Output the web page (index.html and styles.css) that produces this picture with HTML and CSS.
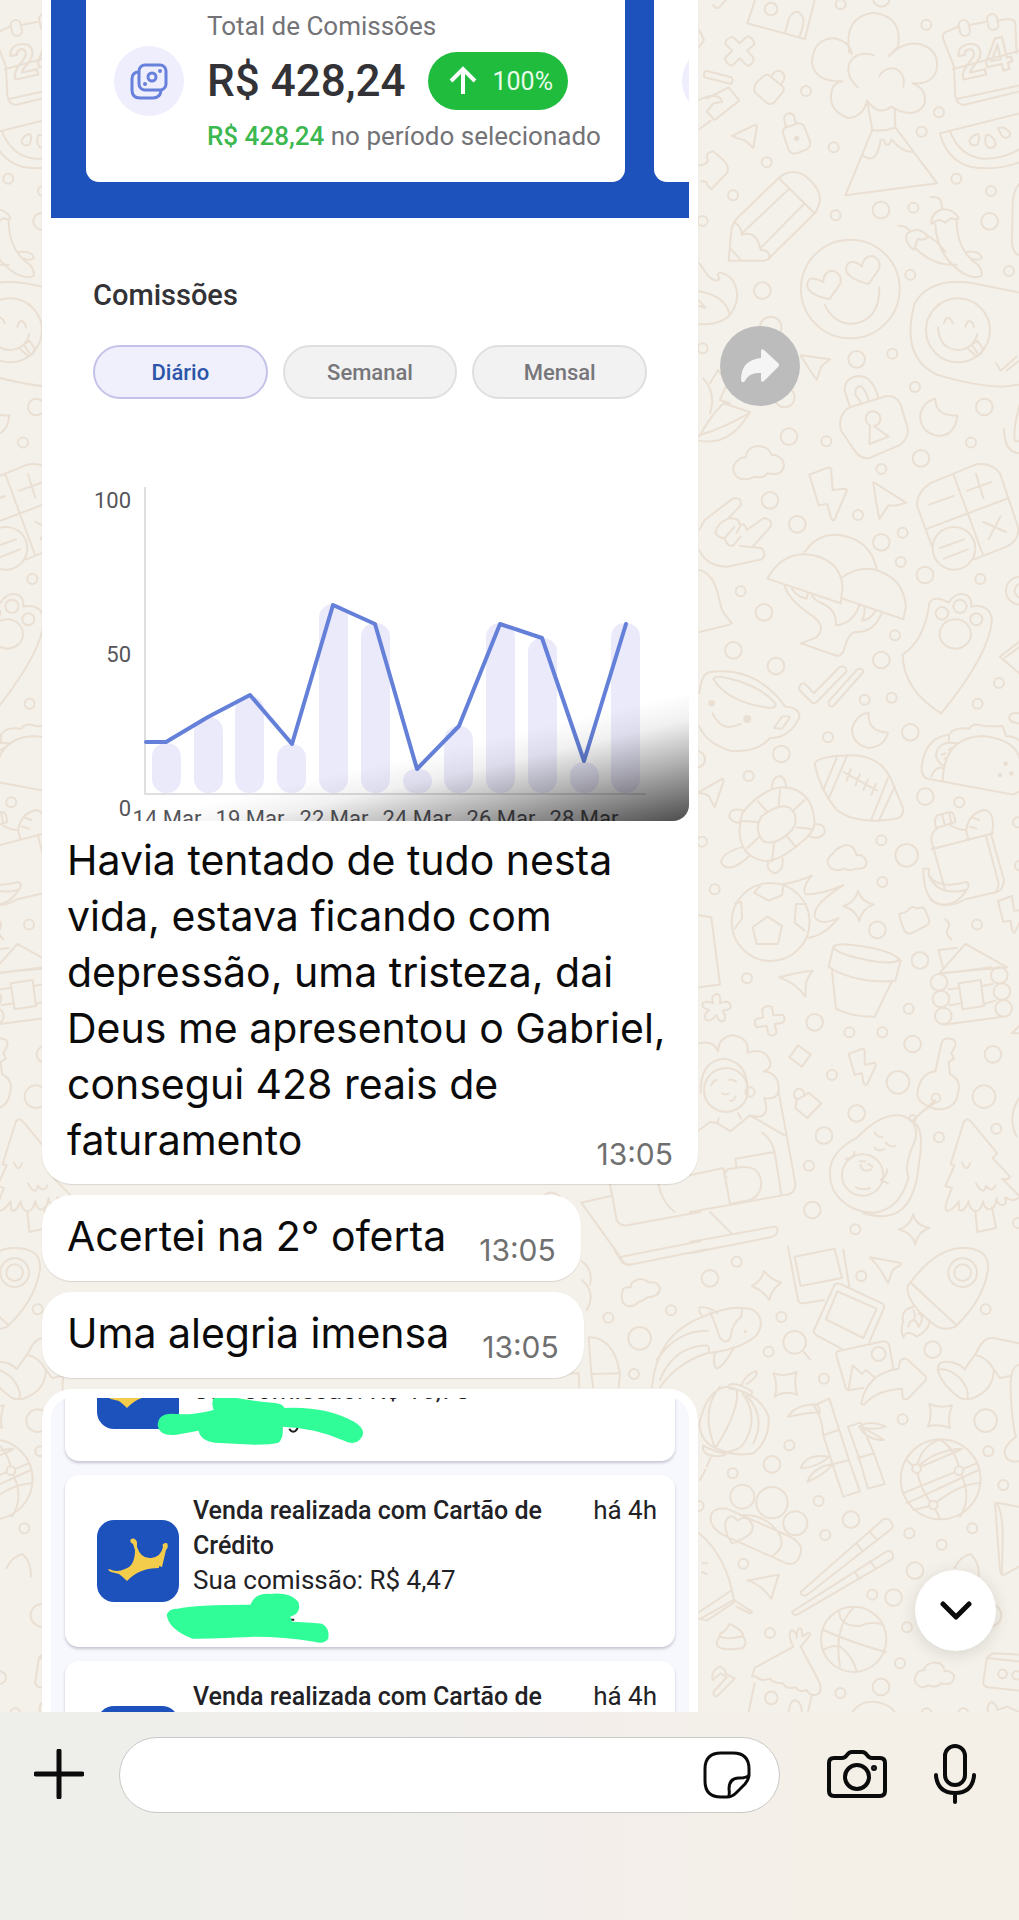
FILE: index.html
```html
<!DOCTYPE html>
<html lang="pt-BR">
<head>
<meta charset="utf-8">
<meta name="viewport" content="width=device-width, initial-scale=1">
<title>Conversa</title>
<link rel="stylesheet" href="styles.css">
</head>
<body>
<main class="chat">
  <svg class="wallpaper" aria-hidden="true">
    <defs>
      <g id="doodles">
        <g transform="translate(690 0) scale(.3333)">
          <g class="dots">
            <circle cx="243" cy="27" r="19"/><circle cx="452" cy="13" r="15"/><circle cx="574" cy="-5" r="25"/><circle cx="709" cy="74" r="15"/><circle cx="348" cy="273" r="15"/><circle cx="747" cy="337" r="15"/><circle cx="695" cy="395" r="15"/><circle cx="431" cy="442" r="15"/><circle cx="230" cy="487" r="15"/><circle cx="129" cy="586" r="15"/><circle cx="799" cy="536" r="15"/><circle cx="903" cy="573" r="15"/><circle cx="573" cy="630" r="25"/><circle cx="670" cy="623" r="15"/><circle cx="899" cy="664" r="25"/><circle cx="437" cy="646" r="15"/><circle cx="38" cy="663" r="15"/><circle cx="661" cy="824" r="15"/><circle cx="957" cy="813" r="15"/><circle cx="217" cy="872" r="25"/><circle cx="242" cy="982" r="32"/><circle cx="38" cy="1045" r="15"/><circle cx="500" cy="1078" r="25"/><circle cx="607" cy="1061" r="15"/><circle cx="284" cy="1192" r="30"/><circle cx="675" cy="1161" r="15"/><circle cx="883" cy="1221" r="25"/><circle cx="297" cy="1310" r="25"/><circle cx="409" cy="1324" r="15"/><circle cx="843" cy="1328" r="15"/><circle cx="693" cy="1375" r="25"/>
          </g>
          <path d="M195 0L172 70L345 117L374 0M285 98L297 55Q318 18 338 50Q346 62 328 112M70 15Q78 30 90 20L108 0"/>
          <path d="M128 110L149 130L170 110Q182 108 190 122Q196 132 190 136L171 152L190 172Q194 184 182 194Q174 200 168 194L149 175L128 196Q116 198 108 184Q102 176 108 170L127 152L106 132Q104 118 128 110Z"/>
          <path d="M48 212L124 232Q132 238 124 252L44 232Q38 220 48 212ZM28 90L42 120L28 140M28 300Q62 282 84 290Q98 300 96 306L70 310L50 335L74 360L148 302L116 262L50 296M28 388L62 362"/>
          <path d="M200 246L225 226Q232 222 240 228L276 258Q284 264 280 274L254 306Q244 316 232 310L196 278Q188 266 200 246ZM244 230Q252 212 266 212Q288 218 282 240L272 254"/>
          <path d="M284 384Q276 392 280 402L296 450Q304 464 320 460L350 448Q364 440 360 424L342 378Q334 368 322 370ZM288 380L282 358Q284 340 300 340Q314 344 314 356L318 370"/>
          <circle class="ink" cx="320" cy="415" r="8"/>
          <path d="M126 408L196 374Q202 376 200 384L190 444L164 420Q144 418 126 408ZM28 496Q52 494 54 480Q46 468 56 458L70 454L106 486Q118 502 112 518L64 568L50 554Q54 542 34 544"/>
          <path d="M478 158Q460 50 550 38Q640 50 624 140L597 168Q640 122 690 132Q750 150 740 210Q726 254 668 250Q716 270 702 316Q670 360 603 320Q566 350 531 302Q520 350 474 354Q410 330 426 270Q432 248 458 244Q376 246 366 190Q368 118 430 114Q480 124 486 162M552 166Q500 150 478 190Q466 230 504 262M568 228Q584 200 616 206Q648 222 640 260"/>
          <path d="M531 302L547 390L466 586L742 550L616 382L614 326M547 390Q582 396 616 382M516 464Q560 500 572 420Q582 412 586 432Q600 440 604 418Q640 460 672 456"/>
          <path d="M804 80L764 98Q756 106 760 118L792 200L796 286Q800 316 824 314L990 274M788 208L990 152M804 296L990 256M842 74L886 66M926 62Q976 50 976 72L980 160"/>
          <rect x="808" y="60" width="30" height="48" rx="15" transform="rotate(-12 823 84)"/><rect x="893" y="42" width="30" height="48" rx="15" transform="rotate(-12 908 66)"/>
          <text class="date" x="816" y="240" transform="rotate(-13 816 240)">24</text>
          <path d="M750 400L990 340M750 400Q770 480 840 500Q920 514 990 486M780 394Q810 470 880 476Q940 478 990 446M838 424Q846 404 864 402Q872 414 862 434Q844 442 838 424ZM890 404Q910 404 918 434Q906 450 892 440Q880 426 890 404ZM924 384Q950 376 962 404Q950 420 936 408Z"/>
          <path d="M116 782L124 690Q128 670 142 654L266 534Q300 504 340 524Q390 560 390 600Q386 624 374 640L240 772Q234 780 220 782ZM266 534L374 640M134 668Q154 680 156 704Q200 690 212 750Q240 748 238 776M156 700L296 568M212 744L342 612M124 748L154 782"/>
          <path d="M722 592Q756 584 756 626M724 672Q722 640 756 628Q790 626 806 654Q796 662 784 654L766 668Q748 652 724 672ZM736 672Q740 770 820 820Q860 840 876 826Q876 800 852 786Q800 742 800 662M832 756Q870 752 876 774Q860 784 846 776M626 678Q650 676 660 694M652 700Q668 688 684 690Q710 698 714 712Q700 724 684 716L672 750Q640 726 652 700ZM676 744Q730 800 800 794M710 706Q740 720 766 756"/>
          <circle cx="481" cy="867" r="148"/>
          <path d="M352 860Q350 834 372 836Q388 838 400 846Q402 812 428 812Q456 820 452 850L418 898Q360 886 352 860ZM468 808Q470 784 490 786Q504 788 516 800Q520 768 548 768Q574 778 568 806L536 852Q472 836 468 808ZM404 914Q430 970 484 972Q570 964 568 862"/>
          <path d="M990 878L850 850Q720 830 674 910Q630 1070 740 1124Q860 1160 940 1160L990 1154M990 550Q968 570 968 620L966 730Q970 764 990 766"/>
          <circle cx="804" cy="991" r="96"/>
          <path d="M762 970Q768 950 776 954Q784 956 788 970M826 980Q832 960 840 964Q850 968 852 982M744 982Q748 1048 804 1050Q850 1048 862 1002M832 1044L862 1022L878 1044Q878 1066 858 1068ZM848 1038L862 1058M918 1090L932 1112L980 1070M950 1112L990 1080"/>
          <path d="M28 790L56 830Q80 850 88 836Q78 820 92 818Q140 830 142 890Q130 980 28 972M28 874Q110 890 118 944M28 902L46 924L28 918"/>
          <path d="M332 1066L420 1078Q400 1092 394 1100L380 1140Q352 1100 332 1066M28 1310Q60 1250 100 1210L180 1236Q120 1340 28 1322M28 1306Q110 1280 176 1240M40 1136Q80 1180 60 1240M60 1150L84 1110L112 1150L90 1200L120 1210"/>
          <path d="M480 1222L464 1172Q462 1132 508 1128Q548 1130 564 1190M514 1208L496 1184Q494 1160 510 1158Q526 1164 536 1202M480 1222L590 1188Q620 1186 632 1214L652 1280Q660 1310 632 1334L540 1374Q510 1380 490 1346L452 1290Q444 1240 480 1222ZM552 1278L596 1310L538 1332L540 1276A22 22 0 1 1 552 1278"/>
          <path d="M736 1196Q736 1250 802 1246Q796 1306 746 1308Q694 1300 690 1250Q696 1206 736 1196ZM990 1212Q970 1280 974 1320Q980 1330 990 1320M942 1286Q944 1360 990 1360"/>
        </g>
        <g transform="translate(690 460) scale(.3333)">
          <g class="dots">
            <circle cx="240" cy="121" r="25"/><circle cx="322" cy="193" r="25"/><circle cx="504" cy="165" r="15"/><circle cx="574" cy="27" r="15"/><circle cx="574" cy="247" r="25"/><circle cx="638" cy="218" r="15"/><circle cx="632" cy="306" r="15"/><circle cx="705" cy="345" r="25"/><circle cx="871" cy="357" r="15"/><circle cx="152" cy="394" r="15"/><circle cx="222" cy="457" r="25"/><circle cx="615" cy="526" r="15"/><circle cx="130" cy="571" r="25"/><circle cx="258" cy="618" r="25"/><circle cx="574" cy="600" r="25"/><circle cx="927" cy="669" r="15"/><circle cx="863" cy="731" r="15"/><circle cx="524" cy="719" r="15"/><circle cx="605" cy="713" r="15"/><circle cx="661" cy="817" r="25"/><circle cx="414" cy="832" r="15"/><circle cx="274" cy="882" r="25"/><circle cx="20" cy="898" r="25"/><circle cx="176" cy="948" r="15"/><circle cx="706" cy="1010" r="25"/><circle cx="808" cy="1027" r="15"/><circle cx="36" cy="1145" r="15"/><circle cx="574" cy="1141" r="15"/><circle cx="650" cy="1186" r="34"/><circle cx="577" cy="1266" r="15"/><circle cx="74" cy="1288" r="15"/><circle cx="562" cy="1410" r="25"/><circle cx="861" cy="1394" r="15"/><circle cx="984" cy="1087" r="15"/><circle cx="990" cy="1217" r="15"/><circle cx="990" cy="392" r="42"/><circle cx="996" cy="392" r="22"/>
          </g>
          <path d="M148 -2Q116 20 140 50Q160 66 196 50Q220 56 232 40Q280 50 282 14Q276 -16 244 -16Q236 -42 200 -42Q168 -36 168 -8Q150 -8 148 -2Z"/>
          <path d="M358 44L416 22Q426 24 424 36L428 90L466 86Q474 88 468 98L434 178Q428 186 422 172L412 132L386 136ZM550 66L648 128Q620 140 596 136L568 176Q556 120 550 66Z"/>
          <path d="M28 210L44 180L128 116Q156 110 152 136L114 176Q150 170 150 200L140 218M114 176Q80 190 76 220Q90 236 104 234L134 200M104 234Q110 262 130 256L152 230M150 196Q166 186 170 210L222 174Q250 180 242 200L186 262L214 264Q232 280 216 298L112 320Q50 320 28 270M150 258L190 262"/>
          <path d="M682 140Q676 100 720 70L850 16Q900 2 930 40L984 200Q990 240 950 260L852 298M682 140L730 270M790 42L878 282M712 206L956 114M718 134L790 108M832 92L904 66M858 42L880 114M880 186L948 216M932 168L896 238"/>
          <circle class="cover" cx="792" cy="265" r="64"/><path d="M750 264L822 238M762 296L834 268"/>
          <path d="M344 276Q380 222 440 224Q540 234 560 326M232 356Q270 286 340 282Q450 290 458 380L452 430ZM454 354Q500 320 550 328Q640 350 648 440L640 478L458 416M284 378Q296 420 370 470Q410 500 380 532L332 550L442 588Q456 586 462 570Q474 520 496 516Q550 520 574 462M306 386Q320 410 350 416L354 400M366 406Q370 420 400 432Q440 450 438 496Q490 490 508 436M524 442Q526 460 516 482Q540 480 556 454"/>
          <path d="M28 330Q70 340 86 410Q94 450 102 460L126 490Q120 496 28 516"/>
          <path d="M638 584Q704 540 718 430Q730 404 776 428Q800 390 834 408Q846 420 844 440Q900 430 906 480Q900 580 754 760Q640 690 638 584Z"/><circle cx="756" cy="460" r="19"/><circle cx="810" cy="439" r="20"/><circle cx="859" cy="478" r="18"/><ellipse cx="796" cy="522" rx="47" ry="44"/>
          <path d="M28 700Q34 640 60 636Q200 620 286 740Q330 742 328 772Q300 834 240 834Q200 880 120 872Q50 850 28 800M70 656Q80 646 110 654Q210 676 256 730Q262 742 240 744Q110 726 70 656ZM252 804L276 770Q296 766 300 772L276 806ZM68 760Q96 820 152 792"/><circle class="ink" cx="65" cy="730" r="10"/><circle class="ink" cx="172" cy="777" r="12"/>
          <path d="M328 690Q326 670 344 670L372 700L448 622Q466 614 470 634L380 726Q372 732 364 726ZM416 724L500 630Q516 620 520 636L430 738Q414 744 416 724Z"/>
          <path d="M536 758Q532 816 594 818Q584 860 536 864Q486 852 486 806Q500 762 536 758ZM930 590L990 544M946 592L990 560M930 590L990 642M990 760Q950 756 960 780Q970 790 990 790"/>
          <path d="M374 912Q380 890 470 886Q560 880 600 950L640 1046Q640 1070 620 1076Q500 1096 440 1050Q390 990 374 912ZM440 894L400 990M470 890L416 1016M594 954L544 1080M614 980L566 1084M460 936L562 992M482 928L470 962M510 942L496 976M534 958L520 990M558 972L544 1004"/>
          <path d="M716 958Q690 950 696 912Q710 830 778 824Q790 800 838 806Q850 786 880 798Q920 800 938 798L948 828Q990 830 998 860M720 958L970 1004L996 990M758 966Q760 830 880 828Q980 840 990 900M778 824L776 842M800 850Q740 840 738 890Q746 910 760 916M724 950Q736 920 756 924M756 884l10 -4M764 896l8 -4M776 870l8 -6"/><circle class="ink" cx="947" cy="911" r="7"/><circle class="ink" cx="930" cy="945" r="7"/><circle class="ink" cx="964" cy="940" r="7"/>
          <path d="M28 996L98 956Q104 960 98 972L74 1042L56 1008Q44 998 28 1000"/>
          <path d="M156 1060Q230 970 300 984Q370 1000 374 1090Q370 1120 330 1150Q260 1210 220 1202Q150 1190 148 1110ZM214 1070Q270 1026 300 1044Q330 1070 308 1108Q260 1160 220 1144Q190 1110 214 1070ZM270 990L266 1036M344 1020L312 1050M370 1108L320 1102M318 1162L290 1128M246 1204L252 1150M172 1164L208 1130M150 1082L202 1086M204 1024L232 1056M246 988Q244 950 270 948Q290 956 288 984M160 1052Q118 1040 118 1072Q130 1090 150 1088M372 1092Q408 1090 404 1118Q390 1140 360 1130M160 1160Q90 1180 94 1210Q120 1244 180 1186M236 1204Q224 1230 256 1240Q282 1230 278 1196"/>
          <path d="M430 1180Q400 1200 422 1224Q440 1236 464 1226Q480 1236 496 1226Q530 1230 530 1206Q520 1180 500 1186Q490 1150 464 1156Q436 1166 430 1180Z"/>
          <path d="M742 1066L782 1056Q794 1058 796 1086L740 1104Q728 1084 742 1066ZM756 1064L764 1094M778 1060L784 1090M744 1104Q724 1114 724 1140L764 1286M782 1096Q806 1110 828 1110L836 1140M724 1168L910 1120M830 1106Q836 1060 884 1050Q914 1056 908 1110L904 1126L942 1260Q940 1290 920 1296L826 1318M888 1128L926 1270Q924 1294 910 1300M846 1072l22 8M840 1100l20 6M700 1226H718L716 1244Q740 1290 828 1266Q840 1270 834 1284Q800 1340 750 1334Q700 1320 700 1226ZM716 1244Q740 1310 830 1290"/>
          <circle cx="242" cy="1386" r="117"/>
          <path d="M192 1298L210 1278M280 1278L276 1306L236 1322L192 1298M188 1402L232 1370L276 1398L264 1452H200ZM318 1332H348M318 1332L314 1388L344 1412M154 1326L136 1330M154 1326L156 1376L134 1406M280 1272Q330 1264 366 1246Q336 1280 346 1302Q380 1308 460 1276Q370 1330 374 1370Q390 1400 446 1374Q400 1430 352 1434"/>
          <path d="M504 1292Q514 1326 552 1334Q516 1344 508 1384Q498 1350 460 1338Q496 1328 504 1292Z"/>
          <path d="M628 1362L632 1382L644 1414Q654 1424 664 1420L710 1396Q722 1388 716 1376L704 1346Q694 1340 680 1346Q668 1336 658 1346Q656 1356 628 1362ZM766 1378Q784 1390 774 1406Q764 1420 784 1438M924 1324L966 1308L972 1352H990M924 1324L940 1386L962 1382Q966 1420 974 1418L990 1386M28 1366L64 1372L90 1574L28 1582"/>
        </g>
        <g transform="translate(690 900) scale(.3333)">
          <g class="dots">
            <circle cx="171" cy="235" r="15"/><circle cx="690" cy="181" r="25"/><circle cx="656" cy="326" r="15"/><circle cx="374" cy="367" r="25"/><circle cx="478" cy="397" r="15"/><circle cx="577" cy="397" r="15"/><circle cx="668" cy="432" r="25"/><circle cx="909" cy="463" r="25"/><circle cx="426" cy="525" r="15"/><circle cx="624" cy="547" r="34"/><circle cx="882" cy="590" r="34"/><circle cx="500" cy="640" r="25"/><circle cx="402" cy="707" r="25"/><circle cx="747" cy="712" r="15"/><circle cx="919" cy="686" r="15"/><circle cx="357" cy="797" r="15"/><circle cx="367" cy="930" r="25"/><circle cx="496" cy="988" r="15"/><circle cx="984" cy="969" r="15"/><circle cx="747" cy="247" r="25"/><circle cx="753" cy="297" r="25"/><circle cx="760" cy="348" r="25"/><circle cx="928" cy="226" r="25"/><circle cx="936" cy="275" r="25"/><circle cx="941" cy="325" r="25"/>
          </g>
          <path d="M722 0Q770 30 822 0"/>
          <path d="M268 232Q330 214 368 212Q350 238 348 250L346 290Q320 250 268 232ZM430 140Q440 130 480 134Q600 146 630 180Q600 196 520 178Q436 160 430 140ZM430 140L416 200Q440 220 512 238Q560 248 616 242L632 182M426 214L438 326Q480 350 554 350L604 248"/>
          <path d="M748 220L826 132L952 202ZM760 208L746 150L800 144M806 250L872 240L882 318L818 328ZM748 222L904 202M776 268L806 264M876 258L908 252M780 316L816 310M882 312L916 302M762 374L940 350M990 376L966 400H990"/>
          <path d="M70 310Q60 284 82 282Q94 286 90 310Q118 298 122 318Q124 330 98 332Q112 352 100 364Q84 366 80 344Q60 370 46 358Q40 344 58 330Q34 326 38 310Q50 300 70 310ZM220 352L216 328Q232 312 246 322L250 346L278 344Q290 356 278 368L254 372L260 398Q250 412 236 404L230 378L200 382Q190 370 198 358ZM324 436L362 464L336 500L298 472ZM476 462L518 446Q526 448 524 460V494L554 488Q560 492 556 500L532 552Q526 560 520 546L516 520L494 524Z"/>
          <path d="M320 600Q304 580 320 568Q340 562 344 586L356 578L394 610L352 654L316 624ZM320 600L344 586"/>
          <path d="M28 430Q70 420 84 454Q86 410 130 406Q180 416 172 458Q230 440 242 490Q240 508 222 514Q270 520 266 576Q256 602 222 594Q240 640 210 650L180 648M32 580Q30 480 104 476Q180 490 170 580"/><circle cx="108" cy="570" r="66"/><circle cx="180" cy="576" r="14"/>
          <path d="M64 556Q70 540 80 540M118 540Q130 536 138 546M96 580Q110 586 116 580M120 602Q132 604 136 590M86 654L82 670L122 694L180 646L284 706M144 640L154 656M28 690L60 666L82 670M266 576L316 850Q318 880 290 884L0 936M216 698Q250 720 256 770M136 776L254 756L274 884M136 776L140 804L112 808Q96 830 110 832M100 804L120 912M0 826L100 804M140 804Q210 790 214 850Q210 900 160 904L120 912M0 1026L252 980Q270 982 258 1004Q250 1012 230 1014L0 1060M60 936L126 1002"/>
          <path d="M500 714Q570 640 630 646Q690 660 676 720Q640 800 656 830Q630 930 550 938Q470 936 430 870Q390 770 500 714ZM676 670Q700 690 690 770L680 840Q650 980 520 940M554 696Q560 712 578 712M554 742Q560 756 584 748M588 728Q600 744 616 738M466 776Q490 780 494 756M592 808Q590 830 572 840L594 850M512 794Q514 820 544 808M498 862Q520 872 540 864M510 784h16M534 792l14 8"/><circle cx="518" cy="825" r="62"/>
          <path d="M756 424Q768 410 792 420Q800 430 794 442L784 460L792 476L776 486L780 522Q816 540 804 580Q796 630 740 628Q680 610 682 580Q690 520 736 514ZM736 600L670 660M738 606L690 640"/><circle cx="738" cy="594" r="13"/><circle cx="668" cy="655" r="10"/>
          <path d="M822 664Q832 650 844 666L922 760L908 774L960 830Q954 842 936 836L990 890Q970 910 946 892Q952 920 932 914Q920 910 920 894Q914 934 894 928Q880 920 880 904Q870 940 850 932Q836 920 836 904Q820 940 808 930L806 904Q780 940 768 930Q762 920 786 864L766 858L794 796L782 792ZM816 788Q830 820 840 790M858 850Q880 890 888 858Q906 880 916 856M856 932L862 996L918 984L906 922"/>
          <path d="M670 942Q676 976 718 984Q682 996 676 1034Q668 1000 626 988Q660 980 670 942ZM990 590Q950 650 980 710"/>
        </g>
        <g transform="translate(560 1250) scale(.3333)">
          <g class="dots">
            <circle cx="530" cy="35" r="15"/><circle cx="450" cy="85" r="25"/><circle cx="904" cy="78" r="15"/><circle cx="333" cy="181" r="15"/><circle cx="145" cy="203" r="15"/><circle cx="239" cy="265" r="34"/><circle cx="222" cy="372" r="15"/><circle cx="664" cy="201" r="15"/><circle cx="626" cy="305" r="15"/><circle cx="792" cy="386" r="15"/><circle cx="1118" cy="299" r="25"/><circle cx="1277" cy="178" r="15"/><circle cx="1028" cy="508" r="15"/><circle cx="1277" cy="512" r="34"/><circle cx="1285" cy="604" r="15"/><circle cx="1330" cy="705" r="15"/><circle cx="688" cy="586" r="15"/><circle cx="636" cy="643" r="25"/><circle cx="518" cy="670" r="15"/><circle cx="776" cy="753" r="15"/><circle cx="873" cy="809" r="25"/><circle cx="796" cy="855" r="15"/><circle cx="1048" cy="850" r="15"/><circle cx="1237" cy="835" r="15"/><circle cx="1145" cy="884" r="15"/><circle cx="1065" cy="962" r="25"/><circle cx="550" cy="941" r="15"/><circle cx="937" cy="1034" r="15"/><circle cx="1001" cy="1043" r="25"/><circle cx="1041" cy="1132" r="15"/><circle cx="630" cy="1149" r="15"/><circle cx="1020" cy="1240" r="15"/><circle cx="841" cy="1329" r="15"/><circle cx="963" cy="1311" r="25"/><circle cx="634" cy="1344" r="19"/><circle cx="547" cy="740" r="36"/><circle cx="636" cy="758" r="47"/><circle cx="706" cy="820" r="36"/><circle cx="1208" cy="68" r="43"/><circle cx="1208" cy="68" r="25"/><circle cx="704" cy="277" r="34"/><circle cx="956" cy="312" r="21"/><circle cx="1328" cy="1272" r="13"/><circle cx="1370" cy="1276" r="13"/><circle cx="1290" cy="1096" r="34"/><circle cx="1100" cy="1390" r="15"/><circle cx="1210" cy="1390" r="15"/><circle cx="416" cy="768" r="15"/>
          </g>
          <path d="M164 0L184 34Q194 46 210 44L440 -2M190 116Q180 140 190 160Q210 180 236 156Q250 154 262 142Q300 140 300 114Q290 92 268 98Q250 84 234 88Q210 96 212 112Q196 110 190 116Z"/>
          <path d="M612 62Q632 90 664 98Q636 116 628 150Q610 122 576 108Q606 92 612 62ZM640 370Q676 382 710 366Q700 402 712 434Q674 420 644 440Q656 402 640 370ZM1108 462Q1142 476 1176 466Q1162 500 1170 534Q1134 520 1104 530Q1118 496 1108 462Z"/>
          <path d="M684 -10L714 150Q718 162 730 160L792 150M704 20L824 -4L846 84L722 108ZM850 0L868 110M824 104Q832 98 842 102L966 160Q976 168 970 180L928 276M824 104L762 240Q760 250 770 256L848 298M832 124L950 176L910 264L798 208Z"/>
          <path d="M930 22L1020 38Q1026 42 1018 48Q1000 54 996 66L984 100Q964 56 930 22ZM1042 110Q1120 0 1200 -6Q1290 -10 1284 60Q1270 150 1186 230Q1150 246 1120 222Q1040 160 1042 110ZM1054 100L1188 224M1060 170Q1020 180 1030 216Q1020 240 1030 262Q1040 236 1070 260Q1110 240 1108 210M1060 180Q1070 200 1060 210M1044 230Q1060 190 1076 230Q1096 200 1076 190"/>
          <path d="M276 412Q290 250 430 200Q520 160 580 180Q620 210 590 256Q540 300 440 310Q350 340 300 412M420 172Q450 170 472 190M418 174Q416 190 430 200M450 186Q470 230 478 260Q500 290 512 260Q516 220 544 200L546 176M290 330Q350 240 444 242M300 390Q340 290 440 286Q450 290 446 306M466 308Q456 340 470 356Q490 350 520 296M730 304L750 328"/><circle class="ink" cx="556" cy="245" r="5"/>
          <path d="M828 312Q828 304 840 302L970 274Q984 274 988 286L1000 354M828 312L858 416Q862 422 870 420L910 414M866 416L878 346L906 372L918 360L946 384M904 460Q920 370 1016 356L1020 334Q1030 320 1044 330L1098 380Q1100 388 1094 394L1044 446Q1030 452 1028 440L1026 416Q950 420 914 462Q904 466 904 460Z"/>
          <path d="M1134 364Q1130 330 1170 336Q1200 340 1214 358L1250 306Q1270 260 1300 264L1377 280M1134 364Q1150 410 1200 444Q1220 452 1240 444Q1300 420 1302 360M1134 360Q1160 350 1200 384Q1230 420 1222 448M1244 314Q1280 320 1300 356L1320 384L1350 378M1377 344Q1350 350 1352 420Q1356 520 1368 560Q1330 590 1334 610Q1340 640 1377 634"/>
          <path d="M418 520Q440 420 500 410Q600 430 626 500Q630 570 580 610Q530 620 480 600Q420 580 418 520ZM508 404Q530 396 576 424L574 440Q540 416 508 416ZM430 586Q450 600 498 612Q480 626 440 612Q424 600 430 586ZM480 410Q420 480 464 590M530 418Q540 480 466 594M548 430Q600 500 552 580Q540 600 500 606M560 438Q620 500 580 580M544 406Q560 370 590 364Q596 380 560 402M452 622L440 650M420 690L436 660"/>
          <path d="M762 466L808 446L838 540L870 640L900 724L850 740L820 650L790 556Q786 500 762 466ZM790 556L836 540M820 642L868 630M684 500Q710 460 774 464L780 486Q730 490 684 500ZM864 530L902 518L942 610L974 702L924 716L896 620ZM894 624L942 610M898 530Q930 508 978 530Q950 540 910 534Q940 550 972 570Q920 570 898 530ZM722 654Q740 610 804 620M722 654Q760 656 804 624M742 696Q760 650 818 642Q800 670 742 696"/>
          <circle cx="1142" cy="688" r="120"/>
          <path d="M1140 568Q1080 590 1070 656Q1080 720 1120 766L1140 806M1140 568Q1190 600 1198 662Q1240 740 1200 800M1040 630L1068 656Q1120 600 1206 596M1070 656L1200 600M1028 730L1196 662L1250 640M1040 760L1256 660M1060 780L1118 766Q1200 700 1260 700"/>
          <circle class="cover" cx="1070" cy="656" r="13"/><circle class="cover" cx="1197" cy="662" r="13"/><circle class="cover" cx="1120" cy="765" r="13"/>
          <path d="M452 810Q450 770 500 776L690 860Q730 880 722 910Q710 950 680 940L500 860Q456 840 452 810ZM496 820Q500 796 520 800L534 812Q550 796 568 810Q586 830 572 850Q550 870 516 880Q494 850 496 820ZM540 796Q600 790 640 830Q690 880 640 916"/>
          <path d="M722 1026L970 808Q990 800 998 826Q1000 834 990 840L740 1036Q724 1040 722 1026ZM890 880L906 902M930 846L950 868M698 1084L980 904Q1000 900 1000 924L990 932L712 1094Q694 1096 698 1084ZM884 964L898 988M930 934L948 956M562 992L656 974L634 1046Q600 1000 562 992Z"/>
          <path d="M418 850Q500 920 522 1050L418 1108M516 1020L418 1086M522 1050L574 1084Q580 1090 570 1090L530 1070M524 1056L440 1112L418 1106M428 940h14M426 966l14 6"/>
          <path d="M508 1122Q500 1140 490 1146Q476 1150 480 1160Q464 1176 474 1190Q500 1204 548 1194Q564 1180 550 1160Q550 1140 508 1122ZM480 1160Q500 1170 550 1158M576 1280L584 1254L700 1190Q680 1150 696 1140Q712 1150 710 1164Q710 1130 724 1136L728 1160Q750 1140 750 1156L722 1190L780 1300Q786 1330 770 1334Q750 1340 740 1320Q720 1330 708 1312Q680 1320 668 1300Q640 1300 630 1286Q600 1296 590 1280ZM584 1300L566 1386M756 1334L744 1386M686 1386Q690 1350 706 1350Q724 1356 726 1386"/>
          <circle cx="881" cy="1168" r="98"/>
          <path d="M838 1086Q840 1130 900 1128Q940 1110 970 1126M836 1186Q880 1220 890 1264M790 1140Q880 1180 978 1206M884 1070Q820 1130 840 1250M790 1200Q820 1184 836 1190M458 1290Q452 1260 480 1250Q500 1260 496 1270L524 1286L470 1340Q456 1336 462 1324L500 1282L482 1270Z"/>
          <path d="M1066 1280Q1060 1300 1080 1310Q1094 1316 1104 1306Q1130 1316 1142 1300Q1184 1310 1182 1276Q1170 1260 1154 1264Q1150 1236 1120 1238Q1092 1244 1094 1260Q1070 1262 1066 1280ZM1377 1214L1304 1210Q1284 1214 1280 1230L1270 1296Q1270 1310 1284 1312L1377 1322M1280 1224L1377 1234M1184 954Q1200 920 1232 912Q1260 940 1256 980M1377 770L1310 758Q1304 758 1306 770L1320 960Q1322 978 1334 974L1377 950M1310 760Q1330 790 1328 870L1326 974M878 1386Q900 1350 950 1356Q990 1364 1004 1386M1284 1386Q1280 1360 1296 1356Q1312 1366 1312 1380L1342 1370L1377 1386"/>
          <path d="M176 370L94 372L86 262Q160 260 180 370L176 412M94 372L100 412M0 370H56L58 412M66 90Q110 130 80 180M66 34Q100 60 90 104"/>
        </g>
        <g transform="translate(540 1180) scale(.3333)">
          <path d="M208 0L230 120Q238 138 262 136L480 96M124 68L212 48M124 68L240 230Q252 256 272 254M244 230L480 184M354 0Q360 60 404 96M0 60Q30 20 60 50"/>
        </g>
      </g>
    </defs>
    <use href="#doodles"/>
    <use href="#doodles" x="-948"/>
  </svg>

  <div class="thread">
    <div class="row">
      <article class="bubble bubble-media">
        <div class="photo photo-report">
          <header class="totals">
            <section class="total-card">
              <span class="money-icon">
                <svg viewBox="0 0 40 44" width="40" height="44" aria-hidden="true"><path d="M10 13Q3 13 3 20V31Q3 39 11 39H24Q31 39 32 32"/><rect x="10" y="6" width="27" height="25" rx="6"/><circle cx="23" cy="18" r="4"/><circle class="pin" cx="16" cy="25" r="2"/><circle class="pin" cx="31" cy="12" r="2"/></svg>
              </span>
              <div class="total-text">
                <p class="total-label">Total de Comissões</p>
                <div class="total-line">
                  <strong class="total-value">R$ 428,24</strong>
                  <span class="growth"><svg viewBox="0 0 28 30" width="28" height="30" aria-hidden="true"><path d="M14 28V3M2 15L14 3L26 15"/></svg>100%</span>
                </div>
                <p class="total-label"><b class="gain">R$ 428,24</b> no período selecionado</p>
              </div>
            </section>
            <section class="next-card"><span class="money-icon"></span></section>
          </header>
          <section class="commissions">
            <h2 class="commissions-title">Comissões</h2>
            <div class="tabs">
              <button class="tab tab-active" type="button">Diário</button>
              <button class="tab" type="button">Semanal</button>
              <button class="tab" type="button">Mensal</button>
            </div>
          </section>
          <svg class="chart" viewBox="0 0 638 361" role="img" aria-label="Comissões por dia">
            <path class="axis" d="M94 27V334H595"/>
            <g class="bars">
              <rect x="101" y="283" width="29" height="50" rx="14"/><rect x="143" y="257" width="29" height="76" rx="14"/><rect x="184" y="236" width="29" height="97" rx="14"/><rect x="226" y="284" width="29" height="49" rx="14"/><rect x="268" y="144" width="29" height="189" rx="14"/><rect x="310" y="163" width="29" height="170" rx="14"/><rect x="352" y="309" width="29" height="24" rx="12"/><rect x="393" y="266" width="29" height="67" rx="14"/><rect x="435" y="163" width="29" height="170" rx="14"/><rect x="477" y="178" width="29" height="155" rx="14"/><rect x="519" y="302" width="29" height="31" rx="14"/><rect x="560" y="163" width="29" height="170" rx="14"/>
            </g>
            <polyline class="trend" points="95,282 115,282 157,257 199,235 241,284 282,145 324,164 366,309 408,266 449,164 491,178 533,301 575,164"/>
            <g class="ticks ticks-y"><text x="80" y="48">100</text><text x="80" y="202">50</text><text x="80" y="356">0</text></g>
            <g class="ticks ticks-x"><text x="116" y="366">14 Mar</text><text x="199" y="366">19 Mar</text><text x="283" y="366">22 Mar</text><text x="366" y="366">24 Mar</text><text x="450" y="366">26 Mar</text><text x="533" y="366">28 Mar</text></g>
          </svg>
          <div class="photo-shade"></div>
        </div>
        <div class="message-long">
          <p class="message-text">Havia tentado de tudo nesta vida, estava ficando com depressão, uma tristeza, dai Deus me apresentou o Gabriel, consegui 428 reais de faturamento <time class="time">13:05</time></p>
        </div>
      </article>
      <button class="share" type="button" aria-label="Encaminhar">
        <svg viewBox="0 0 40 36" width="40" height="36" aria-hidden="true"><path d="M21 3Q21 0 24 2L38 15Q40 17 38 19L24 33Q21 35 21 32V25Q9 24 5 33Q2 36 1 32Q1 12 21 10Z"/></svg>
      </button>
    </div>

    <article class="bubble message">
      <p class="message-text">Acertei na 2° oferta</p>
      <time class="time">13:05</time>
    </article>

    <article class="bubble message">
      <p class="message-text">Uma alegria imensa</p>
      <time class="time">13:05</time>
    </article>

    <article class="bubble bubble-media bubble-sales">
      <div class="photo photo-sales">
        <section class="sale sale-cut">
          <svg class="app-icon" viewBox="0 0 82 82" aria-hidden="true"><use href="#crown"/></svg>
          <div class="sale-text"><p class="sale-title">Venda realizada com Cartão de Crédito</p><p>Sua comissão: R$ 16,78</p></div>
          <span class="sale-age">há 4h</span>
          <svg class="marker" viewBox="0 0 612 172" aria-hidden="true"><path class="scrap" d="M225 140q4 6 8 0v-3M217 138v4"/><path class="paint" d="M93 137Q93 125 107 125Q127 127 149 121Q145 107 155 107Q163 105 172 109Q188 112 211 114Q219 115 220 119Q262 117 290 133Q302 140 298 148Q292 158 280 152Q250 139 218 138Q220 149 214 154Q208 156 190 156L150 154Q136 152 134 142L112 146Q95 148 93 137Z"/></svg>
        </section>
        <section class="sale">
          <svg class="app-icon" viewBox="0 0 82 82" aria-hidden="true">
            <g id="crown"><path class="crown" d="M12 49Q20 53 28 49Q38 46 38 30L36 24Q32 22 34 19Q38 17 40 22L40 27Q44 39 54 38Q64 37 66 27Q64 23 70 23Q72 27 69 30L65 47L62 46V48Q42 48 30 61Q26 57 22 54L14 52Q10 50 12 49Z"/></g>
          </svg>
          <div class="sale-text"><p class="sale-title">Venda realizada com Cartão de Crédito</p><p>Sua comissão: R$ 4,47</p></div>
          <span class="sale-age">há 4h</span>
          <svg class="marker" viewBox="0 0 612 172" aria-hidden="true"><path class="scrap" d="M222 141v4h8"/><path class="paint" d="M102 140Q105 133 113 134Q130 130 186 130Q190 118 206 119Q226 117 234 127Q238 138 226 142L228 147Q250 148 258 149Q266 154 264 164Q260 170 250 167Q220 162 190 162Q150 164 128 164Q104 155 102 140Z"/></svg>
        </section>
        <section class="sale">
          <svg class="app-icon" viewBox="0 0 82 82" aria-hidden="true"><use href="#crown"/></svg>
          <div class="sale-text"><p class="sale-title">Venda realizada com Cartão de Crédito</p><p>Sua comissão: R$ 4,47</p></div>
          <span class="sale-age">há 4h</span>
        </section>
      </div>
    </article>
  </div>

  <button class="jump" type="button" aria-label="Ir para o fim">
    <svg viewBox="0 0 32 20" width="32" height="20" aria-hidden="true"><path d="M3 3L16 16L29 3"/></svg>
  </button>
</main>

<footer class="composer">
  <button class="tool" type="button" aria-label="Anexar"><svg viewBox="0 0 50 50" width="50" height="50" aria-hidden="true"><path class="thick" d="M25 2V48M2 25H48"/></svg></button>
  <div class="entry">
    <input class="entry-field" type="text" aria-label="Mensagem">
    <button class="tool" type="button" aria-label="Figurinhas"><svg viewBox="0 0 48 48" width="48" height="48" aria-hidden="true"><path d="M24 46H18Q2 46 2 30V18Q2 2 18 2H30Q46 2 46 18V24Q46 28 42 33L33 42Q29 46 24 46ZM25 46Q27 44 26 38Q26 27 36 27Q44 27 46 24"/></svg></button>
  </div>
  <button class="tool" type="button" aria-label="Câmera"><svg viewBox="0 0 60 48" width="60" height="48" aria-hidden="true"><path d="M7 8H15Q18 8 20 5Q22 2 25 2H35Q38 2 40 5Q42 8 45 8H53Q58 8 58 13V41Q58 46 53 46H7Q2 46 2 41V13Q2 8 7 8Z"/><circle cx="30" cy="27" r="12"/><circle class="solid" cx="47" cy="18" r="1"/></svg></button>
  <button class="tool" type="button" aria-label="Gravar áudio"><svg viewBox="0 0 42 60" width="42" height="60" aria-hidden="true"><rect x="11" y="2" width="20" height="39" rx="10"/><path d="M2 31V32Q4 49 21 49Q38 49 40 32V31M21 49V58"/></svg></button>
</footer>
</body>
</html>
```
FILE: styles.css
```css
* { box-sizing: border-box; }

body {
  margin: 0;
  height: 100vh;
  display: flex;
  flex-direction: column;
  font-family: Inter, "Liberation Sans", sans-serif;
  color: #0b0b0b;
  background: #f4f1ea;
}

p, h2 { margin: 0; }

button {
  border: 0;
  padding: 0;
  font: inherit;
  color: inherit;
  background: none;
}

/* Conversation */
.chat {
  position: relative;
  flex: 1;
  min-height: 0;
  overflow: hidden;
}

.wallpaper {
  position: absolute;
  inset: 0;
  width: 100%;
  height: 100%;
  fill: none;
  stroke: #eadfd3;
  stroke-width: 6px;
  stroke-linecap: round;
  stroke-linejoin: round;
}

.wallpaper .ink { fill: #eadfd3; stroke: none; }
.wallpaper .cover { fill: #f4f1ea; }
.wallpaper .date { font: 700 144px "Liberation Sans", sans-serif; }

.thread {
  position: relative;
  display: flex;
  flex-direction: column;
  align-items: flex-start;
  gap: 11px;
  padding-left: 42px;
}

.row {
  display: flex;
  gap: 22px;
}

.bubble {
  background: #fff;
  border-radius: 30px;
  box-shadow: 0 1px 1px rgba(60, 50, 40, .14);
}

.bubble-media {
  width: 656px;
  padding: 0 9px;
}

.row .bubble {
  border-radius: 0 0 30px 30px;
}

.photo {
  position: relative;
  overflow: hidden;
  font-family: Roboto, "Liberation Sans", sans-serif;
}

.photo-report { border-radius: 0 0 16px 16px; }

.totals {
  display: flex;
  gap: 29px;
  padding: 0 0 36px 35px;
  background: #1d52bd;
}

.total-card {
  flex: 0 0 539px;
  display: flex;
  align-items: center;
  gap: 23px;
  padding: 10px 0 30px 28px;
  background: #fff;
  border-radius: 0 0 13px 13px;
}

.next-card {
  flex: 1;
  display: flex;
  align-items: center;
  padding: 10px 0 30px 28px;
  overflow: hidden;
  background: #fff;
  border-radius: 0 0 0 13px;
}

.money-icon {
  flex: none;
  display: grid;
  place-items: center;
  width: 70px;
  height: 70px;
  border-radius: 50%;
  background: #efeefc;
}

.money-icon svg { fill: none; stroke: #6780dc; stroke-width: 3px; }
.money-icon .pin { fill: #6780dc; stroke: none; }

.total-text {
  display: flex;
  flex-direction: column;
  gap: 10px;
}

.total-label {
  font-size: 26px;
  line-height: 32px;
  white-space: nowrap;
  color: #737377;
}

.total-line {
  display: flex;
  align-items: center;
  gap: 22px;
}

.total-value {
  font-size: 44px;
  line-height: 56px;
  font-weight: 500;
  color: #333337;
}

.growth {
  display: flex;
  align-items: center;
  gap: 16px;
  height: 58px;
  padding: 0 15px 0 21px;
  border-radius: 29px;
  background: #1fbc3e;
  color: #e8fbe9;
  font-size: 25px;
}

.growth svg { fill: none; stroke: #fff; stroke-width: 4px; }

.gain { font-weight: 500; color: #3cb850; }

.commissions { padding: 59px 42px 0; }

.commissions-title {
  font-size: 29px;
  line-height: 36px;
  font-weight: 500;
  color: #333337;
}

.tabs {
  display: flex;
  gap: 15px;
  margin: 32px 0 61px;
}

.tab {
  flex: 1;
  height: 54px;
  border: 2px solid #dfdfe0;
  border-radius: 27px;
  background: #f2f2f2;
  color: #77777b;
  font-size: 22px;
  font-weight: 500;
}

.tab-active {
  border-color: #c5c2ea;
  background: #f0effc;
  color: #2a55a8;
}

.chart {
  display: block;
  width: 100%;
}

.axis { fill: none; stroke: #dfdfe2; stroke-width: 2px; }
.bars { fill: #ebeafb; }
.trend { fill: none; stroke: #6480d8; stroke-width: 4px; stroke-linejoin: round; stroke-linecap: round; }
.ticks { font-size: 22px; fill: #55555a; }
.ticks-y { text-anchor: end; }
.ticks-x { text-anchor: middle; }

.photo-shade {
  position: absolute;
  inset: auto 0 0;
  height: 160px;
  background: linear-gradient(167deg, transparent 58%, rgba(0, 0, 0, .06) 67%, rgba(0, 0, 0, .3) 80%, rgba(0, 0, 0, .7) 100%);
}

/* Messages */
.message {
  display: flex;
  align-items: flex-end;
  gap: 33px;
  padding: 13px 25px 17px;
}

.message-long { padding: 11px 16px 16px; }

.message-text {
  font-size: 41px;
  line-height: 56px;
}

.time {
  font-size: 30px;
  line-height: 28px;
  color: #707070;
}

.message-long .time {
  float: right;
  margin-top: 28px;
}

.share {
  flex: none;
  display: grid;
  place-items: center;
  width: 80px;
  height: 80px;
  margin-top: 326px;
  border-radius: 50%;
  background: #bcbcbc;
}

.share svg { fill: #f5f5f5; }

/* Sales screenshot */
.bubble-sales { padding-top: 9px; }

.photo-sales {
  display: flex;
  flex-direction: column;
  gap: 14px;
  padding: 0 14px;
  border-radius: 20px 20px 0 0;
  background: #f7f8fe;
}

.sale {
  position: relative;
  display: flex;
  align-items: flex-start;
  gap: 14px;
  height: 172px;
  padding: 18px 18px 0 32px;
  border-radius: 14px;
  background: #fff;
  box-shadow: 0 2px 3px rgba(20, 20, 40, .22);
  font-size: 26px;
  line-height: 35px;
  color: #222226;
}

.sale-cut {
  margin-top: -109px;
  padding-top: 14px;
}

.app-icon {
  flex: none;
  width: 82px;
  height: 82px;
  margin-top: 27px;
  border-radius: 17px;
  background: #1d52bd;
}

.sale-cut .app-icon { margin-top: 44px; }

.crown { fill: #f4cc4b; }

.sale-text { flex: 1; }

.sale-title {
  max-width: 370px;
  font-size: 25px;
  font-weight: 500;
}

.marker {
  position: absolute;
  inset: 0;
  width: 100%;
  height: 100%;
}

.paint { fill: #31fd98; }
.scrap { fill: none; stroke: #222; stroke-width: 2px; }

.jump {
  position: absolute;
  right: 23px;
  bottom: 61px;
  display: grid;
  place-items: center;
  width: 81px;
  height: 81px;
  border-radius: 50%;
  background: #fff;
  box-shadow: 0 3px 16px rgba(60, 50, 40, .14);
}

.jump svg { fill: none; stroke: #0b0b0b; stroke-width: 5px; stroke-linecap: round; stroke-linejoin: round; }

/* Composer */
.composer {
  flex: none;
  display: flex;
  align-items: flex-start;
  padding: 25px 43px 107px 34px;
  background: linear-gradient(90deg, #eeeeeb, #f0efeb 40%, #f3eeeb 55%, #f4f0e8 80%);
}

.tool {
  display: grid;
  place-items: center;
  height: 74px;
}

.tool svg {
  fill: none;
  stroke: #0b0b0b;
  stroke-width: 4px;
  stroke-linecap: round;
  stroke-linejoin: round;
}

.tool .thick { stroke-width: 5px; }
.tool .solid { fill: #0b0b0b; }

.entry {
  flex: 1;
  display: flex;
  height: 76px;
  margin: 0 47px 0 35px;
  padding: 0 28px;
  border: 1px solid #c8c8c6;
  border-radius: 38px;
  background: #fff;
}

.entry .tool svg { stroke-width: 3px; }

.entry-field {
  flex: 1;
  min-width: 0;
  border: 0;
  outline: 0;
  background: none;
  font: 34px Inter, sans-serif;
}

.composer > .tool + .tool { margin-left: 47px; }
```
